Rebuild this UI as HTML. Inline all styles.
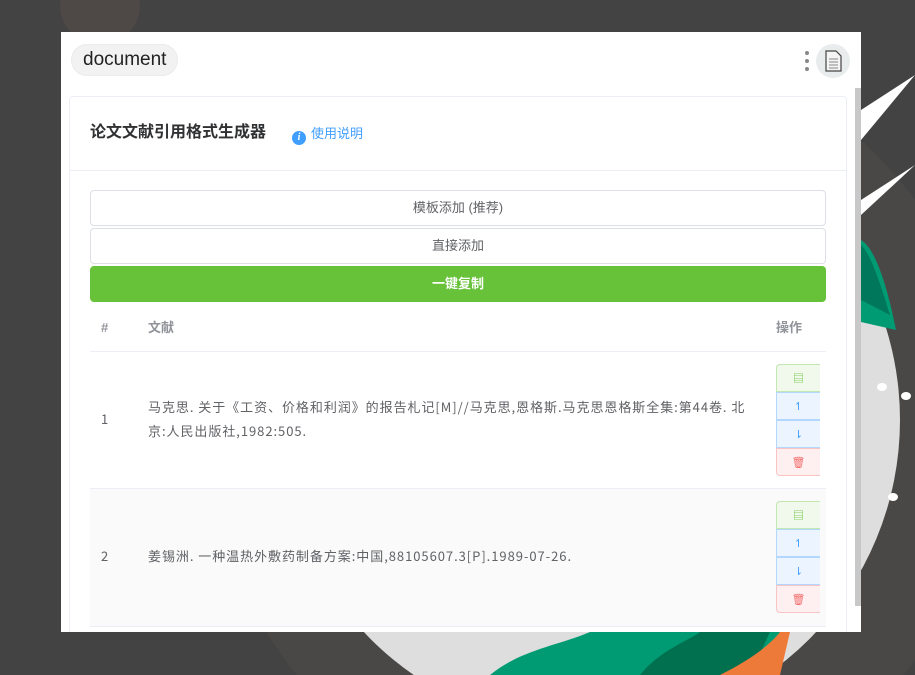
<!DOCTYPE html>
<html><head><meta charset="utf-8"><style>
*{box-sizing:border-box;margin:0;padding:0}
body{width:915px;height:675px;overflow:hidden;background:#444343;position:relative;font-family:"Liberation Sans","Noto Sans CJK SC",sans-serif}
.bg{position:absolute;left:0;top:0}
.panel{position:absolute;left:61px;top:32px;width:800px;height:600px;background:#fff;overflow:hidden}
.tag{position:absolute;left:10px;top:12px;height:32px;padding:0 11px;border-radius:16px;background:#f2f2f2;border:1px solid #ebebeb;font-size:19px;line-height:30px;color:#222}
.dots{position:absolute;left:744px;top:19px}
.dots i{display:block;width:4px;height:4px;border-radius:2px;background:#888;margin-bottom:4px}
.ava{position:absolute;left:755px;top:12px;width:34px;height:34px;border-radius:17px;background:#e9ecec}
.card{position:absolute;left:8px;top:64px;width:778px;height:560px;border:1px solid #ebeef5;border-radius:4px;background:#fff}
.hd{height:74px;border-bottom:1px solid #ebeef5;position:relative}
.title{position:absolute;left:20px;top:25px;font-size:16px;font-weight:bold;color:#303133;line-height:22px}
.help{position:absolute;left:222px;top:28px;font-size:13px;color:#409eff;line-height:18px}
.help b{display:inline-block;width:14px;height:14px;border-radius:7px;background:#409eff;color:#fff;font-size:10px;text-align:center;line-height:14px;font-style:italic;font-family:"Liberation Serif",serif;vertical-align:-2px;margin-right:5px}
.btn{position:absolute;left:20px;width:736px;height:36px;border:1px solid #dcdfe6;border-radius:4px;font-size:13px;color:#606266;text-align:center;line-height:34px;background:#fff}
.green{background:#67c23a;border-color:#67c23a;color:#fff;font-weight:bold}
.th{position:absolute;top:222px;font-size:13px;font-weight:bold;color:#909399;line-height:18px}
.line{position:absolute;left:20px;width:736px;height:1px;background:#ebeef5}
.row2{position:absolute;left:20px;top:392px;width:736px;height:137px;background:#fafafa}
.td{position:absolute;font-size:13px;color:#606266;line-height:24px;font-family:"Noto Sans CJK SC",sans-serif;white-space:nowrap;letter-spacing:0.95px}
.ops{position:absolute;left:706px;width:44px}
.ops div{height:28px;border:1px solid;border-right:none;display:flex;align-items:center;justify-content:center;font-size:11px}
.g{background:#f0f9eb;border-color:#c2e7b0!important;color:#67c23a;border-radius:4px 0 0 0}
.b{background:#ecf5ff;border-color:#b3d8ff!important;color:#409eff}
.r{background:#fef0f0;border-color:#fbc4c4!important;color:#f56c6c;border-radius:0 0 0 4px}
.sb{position:absolute;left:794px;top:56px;width:6px;height:518px;background:#c8c8c8}
</style></head><body>
<svg class="bg" width="915" height="675">
<circle cx="100" cy="5" r="40" fill="#4e4846"/>
<circle cx="600" cy="430" r="390" fill="#494846"/>
<circle cx="590" cy="420" r="310" fill="#dedede"/>
<polygon points="861,110 915,75 861,140" fill="#fff"/>
<polygon points="861,200 915,165 861,215" fill="#fff"/>
<path d="M861,240 C878,250 890,300 896,330 L861,322 Z" fill="#009b72"/>
<path d="M861,245 C872,255 882,290 890,315 L861,300 Z" fill="#00775a"/>
<ellipse cx="882" cy="387" rx="5" ry="4" fill="#fff"/>
<ellipse cx="906" cy="396" rx="5" ry="4" fill="#fff"/>
<ellipse cx="893" cy="497" rx="5" ry="4" fill="#fff"/>
<path d="M490,675 C520,650 560,645 590,632 L780,632 L760,675 Z" fill="#009b72"/>
<path d="M640,675 C660,650 690,640 700,632 L770,632 L750,675 Z" fill="#00704f"/>
<path d="M720,675 C750,660 770,645 780,632 L790,632 L780,675 Z" fill="#ee7a3a"/>
</svg>
<div class="panel">
<div class="tag">document</div>
<div class="dots"><i></i><i></i><i></i></div>
<div class="ava"><svg width="34" height="34"><path d="M10 7h10l5 5v15h-15z" fill="#f4f4f4" stroke="#444" stroke-width="1.2"/><path d="M13 15h9M13 18h9M13 21h9M13 24h9" stroke="#888" stroke-width="1"/></svg></div>
<div class="card">
<div class="hd"><div class="title">论文文献引用格式生成器</div><div class="help"><b>i</b>使用说明</div></div>
<div class="btn" style="top:93px">模板添加 (推荐)</div>
<div class="btn" style="top:131px">直接添加</div>
<div class="btn green" style="top:169px">一键复制</div>
<div class="th" style="left:31px">#</div>
<div class="th" style="left:78px">文献</div>
<div class="th" style="left:706px">操作</div>
<div class="line" style="top:254px"></div>
<div class="td" style="left:31px;top:310px">1</div>
<div class="td" style="left:78px;top:298px">马克思. 关于《工资、价格和利润》的报告札记[M]//马克思,恩格斯.马克思恩格斯全集:第44卷. 北<br>京:人民出版社,1982:505.</div>
<div class="ops" style="top:267px"><div class="g">▤</div><div class="b">↿</div><div class="b">⇂</div><div class="r">🗑</div></div>
<div class="row2"></div>
<div class="line" style="top:391px"></div>
<div class="td" style="left:31px;top:447px">2</div>
<div class="td" style="left:78px;top:447px">姜锡洲. 一种温热外敷药制备方案:中国,88105607.3[P].1989-07-26.</div>
<div class="ops" style="top:404px"><div class="g">▤</div><div class="b">↿</div><div class="b">⇂</div><div class="r">🗑</div></div>
<div class="line" style="top:529px"></div>
</div>
<div class="sb"></div>
</div>
</body></html>
